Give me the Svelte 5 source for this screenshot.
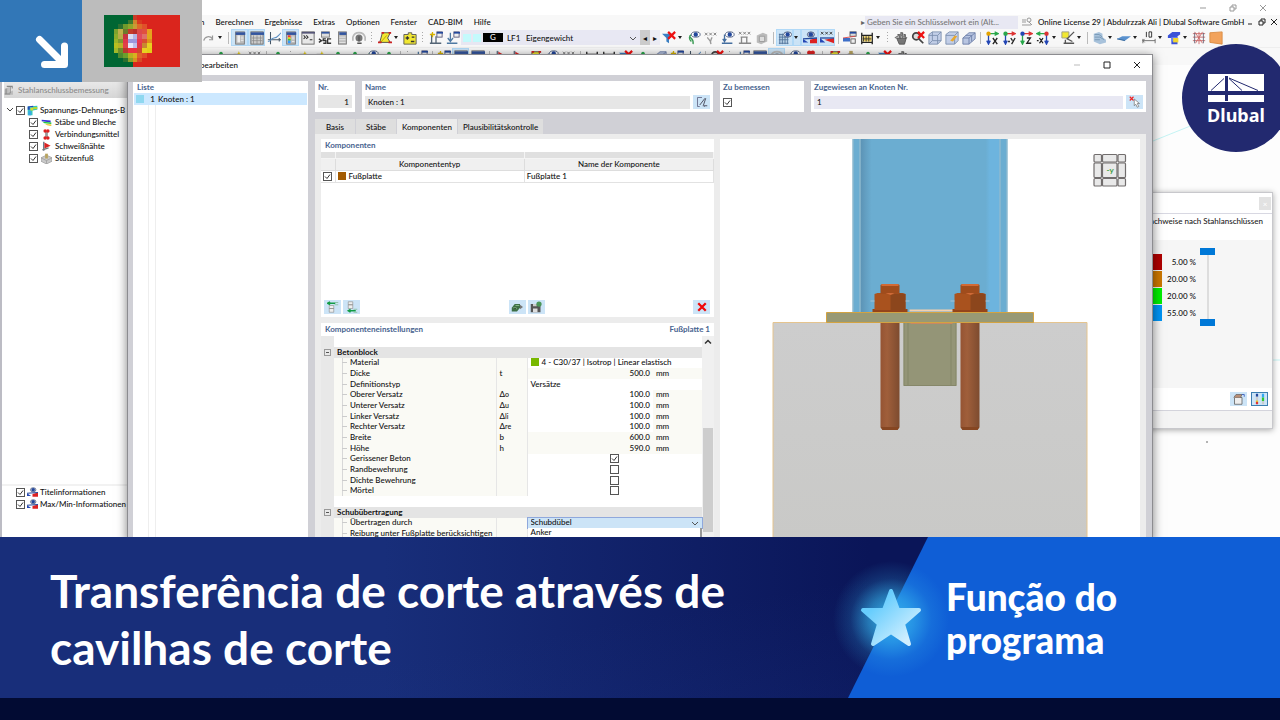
<script>
    const art = {
        redo: '<path d="M2 11c1-5 7-6 10-2M12 5v5H8" fill="none" stroke="#999" stroke-width="1.4"/>',
        panel: '<rect x="3" y="1" width="10" height="14" fill="#bbb" stroke="#777"/><path d="M3 3h11" stroke="#33559f" stroke-width="3"/><rect x="5" y="5" width="3" height="8" fill="#eee"/><path d="M9 7h3M9 9h3M9 11h3" stroke="#eee"/>',
        table: '<rect x="1" y="1" width="14" height="14" fill="#ccc" stroke="#666"/><path d="M1 3h15" stroke="#33559f" stroke-width="3"/><path d="M4 5v10M8 5v10M12 5v10M2 8h12M2 11h12" stroke="#888" stroke-width=".8"/>',
        chart: '<path d="M4 1v14M1 10h15M14 8v4" stroke="#456" fill="none" stroke-width="1.200"/><path d="M1 12c4 0 3-4 7-4s4-2 8-6" stroke="#5b8fc4" fill="none" stroke-width="1.200"/>',
        legend: '<rect x="3" y="1" width="10" height="14" fill="#bbb" stroke="#777"/><path d="M3 3h11" stroke="#33559f" stroke-width="3"/><path d="M6 5v3" stroke="#e33" stroke-width="3"/><path d="M6 7v3" stroke="#e8d820" stroke-width="3"/><path d="M6 9v2" stroke="#3c3" stroke-width="3"/><path d="M6 11v3" stroke="#39f" stroke-width="3"/><path d="M9 7h3M9 9h3M9 12h3" stroke="#eee"/>',
        console: '<rect x="1" y="1" width="14" height="14" fill="#e8e8e8" stroke="#666"/><path d="M1 2h15" stroke="#557" stroke-width="2"/><path d="M3 5l2 2-2 2M6 5l2 2-2 2M10 10h3" fill="none" stroke="#333" stroke-width="1.200"/>',
        script: '<rect x="4" y="1" width="9" height="6" fill="#ddd" stroke="#777"/><path d="M4 2h9" stroke="#33559f" stroke-width="2"/><path d="M1 9l3 2-3 2M9 9H6v2h3v3H6M15 9h-4v5h4" fill="none" stroke="#333" stroke-width="1.500"/>',
        calc: '<rect x="4" y="1" width="9" height="14" fill="#bbb" stroke="#777"/><path d="M5 3h8" stroke="#33559f" stroke-width="3"/><path d="M5 7h7M5 10h7M5 13h7" stroke="#eee"/>',
        support: '<circle cx="8" cy="8" r="4" fill="#777"/><path d="M1 11V7c2-7 12-7 14 0v4" fill="none" stroke="#bbb" stroke-width="2"/><path d="M8 6v6M6 14h5" stroke="#555" stroke-width="1.500"/>',
        shape: '<path d="M5 2h9l-3 6 3 5H2z" fill="#f2e832" stroke="#444"/><path d="M3 13l7-8" stroke="#b90" /><path d="M0 13h4M12 13h4M4 2h3M12 2h3" stroke="#c22" stroke-width="2"/>',
        plusminus: '<path d="M1 4h5V2h4v2h5v11H1z" fill="#f2e832" stroke="#555"/><path d="M3 8h4M5 6v4M9 12h4M10 7h3" stroke="#333" stroke-width="1.500"/>',
        newload: '<path d="M3 3v10M8 13V6M1 14h13" stroke="#567" stroke-width="1.500" fill="none"/><path d="M4 1v6M1 4h6" stroke="#d8b400" stroke-width="1.500"/><rect x="9" y="1" width="6" height="6" fill="#eee" stroke="#557"/><path d="M9 2h7" stroke="#23489c" stroke-width="2"/>',
        load: '<path d="M5 2v9M2 8l3 4 3-4M1 14h12" stroke="#4f7aa3" stroke-width="1.500" fill="none"/><rect x="9" y="1" width="6" height="6" fill="#eee" stroke="#557"/><path d="M9 2h7" stroke="#23489c" stroke-width="2"/>',
        filter: '<path d="M0 3h12L8 8v6l-3-2V8z" fill="#3a7fc2"/><path d="M7 1l8 8M15 1L7 9" stroke="#e11" stroke-width="2.500"/>',
        greeneye: '<path d="M3 5c0 4 5 3 4 10M5 4c-3 2-3 5 0 8" fill="none" stroke="#3b9b55" stroke-width="1.500"/><ellipse cx="10" cy="4" rx="5" ry="3" fill="#fff" stroke="#457"/><circle cx="10" cy="4" r="2.500" fill="#23489c"/>',
        values: '<path d="M1 2l3 3M4 2L1 5M6 2l3 3M9 2L6 5M11 2l3 3M14 2l-3 3" stroke="#777"/><path d="M4 7c0 3 4 2 4 8M9 7c0 3-3 3-1 8" fill="none" stroke="#999" stroke-width="1.500"/>',
        loadeye: '<path d="M4 4v8M2 9l2 3 2-3M1 14h12" fill="none" stroke="#456fa0" stroke-width="1.500"/><ellipse cx="10" cy="4" rx="5" ry="3" fill="#fff" stroke="#457"/><circle cx="10" cy="4" r="2.500" fill="#23489c"/>',
        loadvalues: '<path d="M1 1l3 3M4 1L1 4M6 1l3 3M9 1L6 4M11 1l3 3M14 1l-3 3" stroke="#777"/><path d="M4 7v6M10 7v6M1 14h14M3 7h8" stroke="#888" stroke-width="1.500"/>',
        ghost: '<path d="M2 5l7-3 5 2v8l-7 3-5-2z" fill="#bbb"/><path d="M5 6h6v6H5z" fill="#ddd" stroke="#999"/>',
        grideye: '<path d="M1 3h10v12H1z" fill="#b9d2e6"/><path d="M1 4h10M1 7h11M1 10h11M1 14h11M2 3v12M5 3v12M8 3v12M11 5v10" stroke="#52759b"/><ellipse cx="11" cy="4" rx="4.500" ry="3" fill="#fff" stroke="#457"/><circle cx="11" cy="4" r="2.500" fill="#23489c"/>',
        result: '<path d="M0 9l6 4H0z" fill="#2447b5"/><path d="M8 10l8-2v6H8z" fill="#d22"/><path d="M0 9l16-1" stroke="#23489c" stroke-width="1.500"/><ellipse cx="9" cy="4" rx="4" ry="3" fill="#ccd" stroke="#457"/><circle cx="9" cy="4" r="2.500" fill="#23489c"/>',
        resultvalues: '<path d="M1 1l3 3M4 1L1 4M6 1l3 3M9 1L6 4M11 1l3 3M14 1l-3 3" stroke="#333"/><path d="M0 8l6 5H0z" fill="#2447b5"/><path d="M5 10l11-2v6z" fill="#d22"/><path d="M0 8h16" stroke="#23489c" stroke-width="1.500"/>',
        diagram: '<rect x="8" y="1" width="7" height="5" fill="#ddd" stroke="#555"/><path d="M8 2h7" stroke="#23489c" stroke-width="2"/><path d="M0 8h8v4H0z" fill="#3d6fc8"/><rect x="9" y="9" width="5" height="5" fill="#eee" stroke="#555"/><path d="M0 8l14-2" stroke="#d44"/>',
        film: '<path d="M2 2v13M14 2v13M2 5h12M2 13h12" stroke="#222" stroke-width="1.500"/><path d="M3 6h10v6H3z" fill="#e8ca5a"/><path d="M4 6v6M7 6v6M10 6v6M3 9h10" stroke="#333"/>',
        hand: '<path d="M3 8h11l-2 7H6zM4 4h3v5M8 2h2v6M11 4h2v5" fill="#777" stroke="#555"/><path d="M1 8l6-4 8 4M8 1v6" stroke="#777" stroke-width="1.500" fill="none"/>',
        zoomoff: '<circle cx="6" cy="6" r="4" fill="#ddd" stroke="#444" stroke-width="2"/><path d="M9 9l5 5" stroke="#444" stroke-width="2"/><path d="M8 1l7 7M15 1L8 8" stroke="#e11" stroke-width="2.500"/>',
        cube: '<path d="M1 4l4-3h10v10l-4 4H1z" fill="#c3cfe8" stroke="#7c8fae"/><path d="M1 5h10v10M11 5l4-4M5 1v10h10M5 11l-4 4" fill="none" stroke="#7c8fae"/>',
        cubeyellow: '<path d="M1 4l4-3h10v10l-4 4H1z" fill="#c3cfe8" stroke="#7c8fae"/><path d="M1 5h10v10M11 5l4-4" fill="none" stroke="#7c8fae"/><path d="M6 11l5-6 3 1-5 6z" fill="#e8a830"/>',
        stack: '<path d="M1 8l7-6h7v7l-7 6H1z" fill="#b9c6e2" stroke="#6d7fa8"/><path d="M1 8h7v7M8 8l7-6M4 5h7v7" fill="none" stroke="#6d7fa8"/>',
        axisx: '<path d="M4 3h9M11 1l4 2-4 2" stroke="#29a84b" fill="none" stroke-width="1.500"/><path d="M4 4v10M2 11l2 4 2-4" stroke="#2447b5" fill="none" stroke-width="1.500"/><circle cx="4" cy="3" r="2.500" fill="#e4a300"/><path d="M9 8l5 7M14 8l-5 7" stroke="#222" stroke-width="1.500"/>',
        axisy: '<path d="M4 3h9M11 1l4 2-4 2" stroke="#d33" fill="none" stroke-width="1.500"/><path d="M4 4v10M2 11l2 4 2-4" stroke="#2447b5" fill="none" stroke-width="1.500"/><circle cx="4" cy="3" r="2.500" fill="#29a84b"/><path d="M10 8l2 3M15 8l-4 7M7 12h2" stroke="#222" stroke-width="1.500"/>',
        axisz: '<path d="M4 3h9M11 1l4 2-4 2" stroke="#d33" fill="none" stroke-width="1.500"/><path d="M4 4v10M2 11l2 4 2-4" stroke="#29a84b" fill="none" stroke-width="1.500"/><circle cx="4" cy="3" r="2.500" fill="#2447b5"/><path d="M9 8h4l-4 6h5" fill="none" stroke="#222" stroke-width="1.500"/>',
        axisnx: '<path d="M12 3H3M5 1L1 3l4 2" stroke="#29a84b" fill="none" stroke-width="1.500"/><path d="M12 4v10M10 11l2 4 2-4" stroke="#2447b5" fill="none" stroke-width="1.500"/><circle cx="12" cy="3" r="2.500" fill="#d33"/><path d="M4 8l4 6M8 8l-4 6M1 11h2" stroke="#222" stroke-width="1.500"/>',
        plane: '<path d="M1 1h8v7H1z" fill="#f2e832" stroke="#998"/><path d="M15 1L7 9l6 3M3 14h12M5 10v4" stroke="#555" fill="none" stroke-width="1.500"/>',
        solid: '<path d="M2 3l6-2 4 2v4l4 3v3l-7 2-7-3z" fill="#a9c3dc"/><path d="M3 4h5l4 3M3 7h6l5 3M3 10h6" stroke="#7596b4" fill="none"/>',
        surface: '<path d="M0 9l6-3h10l-7 5z" fill="#5a92cf"/><path d="M0 9l9 2" stroke="#2e6196"/>',
        dimension: '<path d="M1 9v5M15 9v5M1 11h14M3 13l-2-2 2-2" stroke="#666" fill="none"/><path d="M5 1v6M8 1h3v6H8z" stroke="#222" fill="none"/>',
        section: '<path d="M1 5l5-4h9v3l-3 2v9H5V8H1z" fill="#3a52d8"/><path d="M5 7h7v5H5z" fill="#6a82ee"/><path d="M7 8h6v5H7z" fill="#f2d630"/>',
        mesh: '<path d="M1 3h14M1 7h14M1 11h14M3 1l9 13M12 1L4 14M8 1v14" stroke="#c66" /><path d="M3 2v12M13 2v12" stroke="#667"/>',
        orange: '<path d="M1 2l14-1v14L1 13z" fill="#f2a35c" stroke="#d98b42"/>',
        node: '<path d="M3 13V7M13 13V7M2 14h12" stroke="#555"/><path d="M8 4l6 4M8 4L2 8" stroke="#777" fill="none" stroke-width="1.500"/><circle cx="8" cy="4" r="2" fill="#29a84b"/>',
        star: '<path d="M9 1l1 3 3 1-3 1-1 3-1-3-3-1 3-1z" fill="#e8cc10"/><path d="M3 5h5" stroke="#555"/>',
        steel: '<path d="M1 6l6-3v8l6-3v6H1z" fill="#bbb"/><path d="M4 2h8v3M9 3v9M1 13h8M3 5v8" stroke="#888" fill="none" stroke-width="1.500"/>',
        stress: '<path d="M1 2l14-1v6L8 8v7H1z" fill="#35c8c0"/><path d="M1 2h3v5H1zM1 2l8-1v2H1z" fill="#2447b5"/><path d="M9 3h6v3H9z" fill="#b8d830"/><path d="M5 4h4v4H5z" fill="#d8d830"/><path d="M2 9h4v6H2z" fill="#3aa8e8"/>',
        beam: '<path d="M1 4l13 1v3L1 6z" fill="#3434d8"/><path d="M2 7l13 1v2L5 9z" fill="#24c83c"/><path d="M6 10l9 1v2l-6-1z" fill="#e8c11d"/>',
        bolt: '<rect x="6" y="3" width="4" height="10" fill="#999"/><circle cx="6" cy="3" r="2.500" fill="#d22"/><circle cx="10" cy="3" r="2.500" fill="#d22"/><circle cx="6" cy="13" r="2.500" fill="#d22"/><circle cx="10" cy="13" r="2.500" fill="#d22"/>',
        weld: '<path d="M4 1v13" stroke="#678" stroke-width="2"/><path d="M5 2l9 5-9 4z" fill="#d22"/><path d="M2 13l9-3" stroke="#777" stroke-width="2"/>',
        foot: '<path d="M0 7l8-4 8 4v5l-8 4-8-4z" fill="#c9c9c9" stroke="#999"/><path d="M0 7l8 4 8-4M8 11v5" fill="none" stroke="#999"/><path d="M8 1v7" stroke="#b8a460" stroke-width="4"/>',
        edit: '<path d="M8 2H2v12h3M11 14h1" fill="none" stroke="#557" /><path d="M5 12l7-9M13 3l-3 9M9 13h6" stroke="#445" stroke-width="1.200"/>',
        pick: '<path d="M1 1l5 5M6 1L1 6" stroke="#e22" stroke-width="1.500"/><path d="M7 4v9l2-2 2 4 2-1-2-4h3z" fill="#fff" stroke="#777"/>',
        moveup: '<path d="M3 6h6v4H3zM3 10h6v5H3z" fill="#eee" stroke="#888" stroke-width=".8"/><path d="M1 3h10M4 1L1 3l3 2" stroke="#129c46" fill="none" stroke-width="2"/><path d="M10 5h5M10 2h5" stroke="#7bbb92"/>',
        movedown: '<path d="M3 1h6v4H3zM3 5h6v5H3z" fill="#eee" stroke="#888" stroke-width=".8"/><path d="M3 13h10M6 11l-3 2 3 2" stroke="#129c46" fill="none" stroke-width="2"/><path d="M10 11h5M10 15h5" stroke="#7bbb92"/>',
        library: '<path d="M1 9l4-5h7v5l-4 5H1z" fill="#3d6f46"/><path d="M3 9h4v2M6 6h5" stroke="#9cd09c"/><path d="M12 5l4 3-4 3z" fill="#777"/>',
        save: '<path d="M1 4h11l2 2v9H1z" fill="#555"/><path d="M4 10h6v5H4z" fill="#ddd"/><path d="M4 4h5v3H4z" fill="#ccc"/><circle cx="12" cy="4" r="3.500" fill="#4b9658"/>',
        remove: '<path d="M3 3l10 10M13 3L3 13" stroke="#f00808" stroke-width="3"/>',
        box: '<path d="M2 6h10v9H2z" fill="#eee" stroke="#555"/><path d="M1 6l3-4h8l-2 4" fill="#b88e76" stroke="#666"/><path d="M12 2h3v3" stroke="#2447b5" fill="none"/>',
        scale: '<path d="M4 1v4" stroke="#23489c" stroke-width="3"/><path d="M4 5v5" stroke="#ccc" stroke-width="3"/><path d="M4 10v2" stroke="#e8b820" stroke-width="3"/><path d="M4 12v3" stroke="#d33" stroke-width="3"/><path d="M12 1v5" stroke="#33a8f0" stroke-width="3"/><path d="M12 6v5" stroke="#30c830" stroke-width="3"/><path d="M12 11v4" stroke="#ccc" stroke-width="3"/>'
    };

    const toolsLeft = [
        'redo', 'caret', 'sep', '*panel', '*table', 'chart', '*legend', 'console', 'script', 'calc', 'support',
        'dots', 'shape', 'caret', 'plusminus', 'dots', 'newload', 'load'
    ];
    const toolsRight = [
        'filter', 'caret', 'greeneye', 'values', 'loadeye', 'loadvalues', 'ghost', 'sep', '*grideye', '*caret',
        '*result', '*resultvalues', 'sep', 'diagram', 'film', 'caret', 'dots', 'hand', 'zoomoff', 'cube',
        'cubeyellow', 'stack', 'sep', 'axisx', 'axisy', 'axisz', 'axisnx', 'caret', 'plane', 'caret', 'sep',
        'solid', 'caret', 'surface', 'caret', 'dimension', 'caret', 'section', 'caret', 'mesh', 'orange'
    ];
    const toolsSecond = [
        'node', 'star', 'values', 'sep', 'node', 'dots', 'star', 'star', 'node', 'node', 'greeneye', 'node',
        'sep', 'dots', 'load', 'sep', 'newload', '*table', 'table', 'sep', 'weld', 'weld', 'shape', 'loadeye',
        'values', 'sep', 'film', 'film', 'filter', 'node', 'stack', 'newload', 'chart', 'sep', 'zoomoff', 'dots',
        'load', 'table', '*support', 'loadeye', 'bolt', 'sep', 'shape', 'foot', 'node', 'filter', 'hand'
    ];

    const menu = ['n', 'Berechnen', 'Ergebnisse', 'Extras', 'Optionen', 'Fenster', 'CAD-BIM', 'Hilfe'];
    const tree = [
        ['beam', 'Stäbe und Bleche'],
        ['bolt', 'Verbindungsmittel'],
        ['weld', 'Schweißnähte'],
        ['foot', 'Stützenfuß']
    ];
    const tabs = ['Basis', 'Stäbe', 'Komponenten', 'Plausibilitätskontrolle'];
    let activeTab = 'Komponenten';

    const concrete = [
        { name: 'Material', material: '4 - C30/37 | Isotrop | Linear elastisch' },
        { name: 'Dicke', symbol: 't', value: '500.0', fixed: true },
        { name: 'Definitionstyp', text: 'Versätze' },
        { name: 'Oberer Versatz', symbol: 'Δ', sub: 'o', value: '100.0' },
        { name: 'Unterer Versatz', symbol: 'Δ', sub: 'u', value: '100.0' },
        { name: 'Linker Versatz', symbol: 'Δ', sub: 'li', value: '100.0' },
        { name: 'Rechter Versatz', symbol: 'Δ', sub: 're', value: '100.0' },
        { name: 'Breite', symbol: 'b', value: '600.0', fixed: true },
        { name: 'Höhe', symbol: 'h', value: '590.0', fixed: true },
        { name: 'Gerissener Beton', check: true },
        { name: 'Randbewehrung', check: false },
        { name: 'Dichte Bewehrung', check: false },
        { name: 'Mörtel', check: false }
    ];

    const legend = [
        ['#b00000', '5.00 %'],
        ['#cc7700', '20.00 %'],
        ['#00f000', '20.00 %'],
        ['#0095f5', '55.00 %']
    ];

    // emblem cells of the flag: column, row, colour
    const emblem = [
        [6, 0, '#c83c28'],
        [5, 1, '#3f7a2e'], [6, 1, '#d0862c'], [7, 1, '#d83a20'],
        [3, 2, '#2a7030'], [4, 2, '#6f9a2c'], [5, 2, '#8fa62a'], [6, 2, '#c99b35'], [7, 2, '#dc6b28'], [8, 2, '#e0502a'],
        [2, 3, '#7ea22d'], [3, 3, '#c2b04a'], [4, 3, '#6f7a2c'], [5, 3, '#c43a2a'], [6, 3, '#b92f2c'], [7, 3, '#dc4a4a'], [8, 3, '#e05040'], [9, 3, '#e8a020'],
        [2, 4, '#8cac2a'], [3, 4, '#b8ac48'], [4, 4, '#c83440'], [5, 4, '#dcdcf2'], [6, 4, '#b4b4e4'], [7, 4, '#e04a5c'], [8, 4, '#e07068'], [9, 4, '#e0a81c'],
        [2, 5, '#9cb428'], [3, 5, '#7d9a30'], [4, 5, '#e0384a'], [5, 5, '#9c98dc'], [6, 5, '#9c98dc'], [7, 5, '#e83850'], [8, 5, '#d85030'], [9, 5, '#e0901c'],
        [2, 6, '#b8c020'], [3, 6, '#b8b028'], [4, 6, '#e04048'], [5, 6, '#e8e8fa'], [6, 6, '#c0c0ea'], [7, 6, '#e03848'], [8, 6, '#c88830'], [9, 6, '#e8d020'],
        [2, 7, '#a0b82a'], [3, 7, '#6d8d2a'], [4, 7, '#b83a2c'], [5, 7, '#ea3240'], [6, 7, '#ea3240'], [7, 7, '#d0482c'], [8, 7, '#e8d020'], [9, 7, '#e4cc18'],
        [3, 8, '#4f8a2e'], [4, 8, '#6aa02c'], [5, 8, '#b8b020'], [6, 8, '#d8b020'], [7, 8, '#e0602a'], [8, 8, '#e04a2a'],
        [4, 9, '#2c7030'], [5, 9, '#88a02a'], [6, 9, '#d89020'], [7, 9, '#d84a28']
    ];
</script>

{#snippet icon(name)}
    <svg class="icon" viewBox="0 0 16 16" aria-hidden="true">{@html art[name]}</svg>
{/snippet}

{#snippet tools(list)}
    {#each list as item}
        {@const on = item.startsWith('*')}
        {@const name = item.replace('*', '')}
        {#if name === 'sep' || name === 'dots'}
            <i class={name}></i>
        {:else if name === 'caret'}
            <button class="caret" class:on aria-label="Mehr"></button>
        {:else}
            <button class="tool" class:on aria-label={name}>{@render icon(name)}</button>
        {/if}
    {/each}
{/snippet}

<div class="page">
    <main class="desktop">
        <div class="titlebar window-buttons">
            <button aria-label="Minimieren"><svg viewBox="0 0 8 8"><path d="M1 4h6" /></svg></button>
            <button aria-label="Wiederherstellen"><svg viewBox="0 0 8 8"><path d="M1 3h4v4H1zM3 3V1h4v4H5" /></svg></button>
            <button aria-label="Schließen"><svg viewBox="0 0 8 8"><path d="M1 1l6 6M7 1L1 7" /></svg></button>
        </div>

        <nav class="menubar">
            {#each menu as item}
                <button>{item}</button>
            {/each}
            <span class="hint">▸</span>
            <input class="search" aria-label="Suche" placeholder="Geben Sie ein Schlüsselwort ein (Alt..." />
            <svg class="find" viewBox="0 0 12 10"><path d="M1 3h4M1 5h4M1 8h9M8 5l3 3" /><circle cx="8" cy="3" r="2" /></svg>
            <span class="license">Online License 29 | Abdulrzzak Ali | Dlubal Software GmbH</span>
            <div class="window-buttons inner">
                <button aria-label="Fenster minimieren"><svg viewBox="0 0 8 8"><path d="M2 6h4" /></svg></button>
                <button aria-label="Fenster wiederherstellen"><svg viewBox="0 0 8 8"><path d="M1 3h4v4H1zM3 3V1h4v4H5" /></svg></button>
                <button aria-label="Fenster schließen"><svg viewBox="0 0 8 8"><path d="M1 1l6 6M7 1L1 7" /></svg></button>
            </div>
        </nav>

        <div class="toolbar">
            {@render tools(toolsLeft)}
            <div class="loadcase">
                <i class="cyan"></i><i class="cyan"></i><b>G</b><span>LF1</span>
                <select aria-label="Lastfall"><option>Eigengewicht</option></select>
                <svg viewBox="0 0 8 8"><path d="M1 3l3 3 3-3" /></svg>
            </div>
            <button class="step back" aria-label="Zurück">◂</button>
            <button class="step" aria-label="Weiter">▸</button>
            {@render tools(toolsRight)}
        </div>
        <div class="toolbar second">{@render tools(toolsSecond)}</div>

        <div class="workspace">
            <aside class="navigator">
                <h2>{@render icon('steel')} Stahlanschlussbemessung</h2>
                <div class="tree">
                    <label class="root">
                        <svg class="fold" viewBox="0 0 8 8"><path d="M1 2l3 3 3-3" /></svg>
                        <input type="checkbox" checked />{@render icon('stress')}Spannungs-Dehnungs-B
                    </label>
                    {#each tree as [name, text]}
                        <label><input type="checkbox" checked />{@render icon(name)}{text}</label>
                    {/each}
                </div>
                <div class="tree info">
                    {#each ['Titelinformationen', 'Max/Min-Informationen'] as text}
                        <label><input type="checkbox" checked />{@render icon('result')}{text}</label>
                    {/each}
                </div>
            </aside>
            <svg class="model" viewBox="0 0 127 474" preserveAspectRatio="xMidYMin slice"><path d="M0 76l127-51M120 295h7" stroke="#c4f4f4" /><circle cx="54" cy="377" r=".8" fill="#555" /></svg>
        </div>

        <section class="panel">
            <header><button aria-label="Panel schließen">×</button></header>
            <h3>Nachweise nach Stahlanschlüssen</h3>
            <div class="scale">
                <ul>
                    {#each legend as [color, share]}
                        <li><i style="background: {color}"></i>{share}</li>
                    {/each}
                </ul>
                <div class="range">
                    <input type="range" aria-label="Obergrenze" value="100" />
                    <input type="range" aria-label="Untergrenze" value="0" />
                </div>
            </div>
            <footer>
                <button class="small" aria-label="Optionen">{@render icon('box')}</button>
                <button class="small framed" aria-label="Farbskala">{@render icon('scale')}</button>
            </footer>
            <div class="status"></div>
        </section>

        <section class="dialog">
            <header class="dialog-title">
                <h2>bearbeiten</h2>
                <div class="window-buttons">
                    <button class="off" aria-label="Dialog minimieren"><svg viewBox="0 0 8 8"><path d="M1 4h6" /></svg></button>
                    <button aria-label="Dialog maximieren"><svg viewBox="0 0 8 8"><path d="M1 1h6v6H1z" /></svg></button>
                    <button aria-label="Dialog schließen"><svg viewBox="0 0 8 8"><path d="M1 1l6 6M7 1L1 7" /></svg></button>
                </div>
            </header>

            <div class="dialog-body">
                <div class="list">
                    <h3>Liste</h3>
                    <button class="entry"><i></i><span>1</span>Knoten : 1</button>
                    <div class="rules"></div>
                </div>

                <div class="details">
                    <div class="fields">
                        <div class="box">
                            <label for="nr">Nr.</label>
                            <input id="nr" class="right" value="1" />
                        </div>
                        <div class="box">
                            <label for="name">Name</label>
                            <div class="line">
                                <input id="name" value="Knoten : 1" />
                                <button class="small" aria-label="Name bearbeiten">{@render icon('edit')}</button>
                            </div>
                        </div>
                        <div class="box">
                            <label for="design">Zu bemessen</label>
                            <div class="line"><input id="design" type="checkbox" checked /></div>
                        </div>
                        <div class="box">
                            <label for="nodes">Zugewiesen an Knoten Nr.</label>
                            <div class="line">
                                <input id="nodes" class="lilac" value="1" />
                                <button class="small" aria-label="Knoten wählen">{@render icon('pick')}</button>
                            </div>
                        </div>
                    </div>

                    <div class="tabs" role="tablist">
                        {#each tabs as tab}
                            <button role="tab" aria-selected={tab === activeTab} on:click={() => (activeTab = tab)}>{tab}</button>
                        {/each}
                    </div>

                    <div class="tab-body">
                        <div class="column">
                            <div class="card components">
                                <h3>Komponenten</h3>
                                <table>
                                    <thead>
                                        <tr class="band"><td></td><td></td><td></td></tr>
                                        <tr><th></th><th>Komponententyp</th><th>Name der Komponente</th></tr>
                                    </thead>
                                    <tbody>
                                        <tr>
                                            <td><input type="checkbox" aria-label="Fußplatte aktiv" checked /></td>
                                            <td><i class="swatch brown"></i>Fußplatte</td>
                                            <td>Fußplatte 1</td>
                                        </tr>
                                    </tbody>
                                </table>
                                <div class="actions">
                                    <button class="small" aria-label="Davor einfügen">{@render icon('moveup')}</button>
                                    <button class="small" aria-label="Danach einfügen">{@render icon('movedown')}</button>
                                    <span></span>
                                    <button class="small" aria-label="Bibliothek">{@render icon('library')}</button>
                                    <button class="small" aria-label="Speichern">{@render icon('save')}</button>
                                    <span></span>
                                    <button class="small" aria-label="Löschen">{@render icon('remove')}</button>
                                </div>
                            </div>

                            <div class="card settings">
                                <h3>Komponenteneinstellungen <span>Fußplatte 1</span></h3>
                                <div class="scroller">
                                    <table>
                                        <colgroup>
                                            <col class="col-tree" />
                                            <col class="col-name" />
                                            <col class="col-symbol" />
                                            <col class="col-value" />
                                            <col />
                                        </colgroup>
                                        <tbody>
                                            <tr class="section"><td><i class="minus"></i></td><th colspan="4">Betonblock</th></tr>
                                            {#each concrete as row}
                                                <tr>
                                                    <td></td>
                                                    <td class="name">{row.name}</td>
                                                    <td class="symbol">{row.symbol ?? ''}<small>{row.sub ?? ''}</small></td>
                                                    {#if row.value}
                                                        <td class="value" class:fixed={row.fixed}>{row.value}</td>
                                                        <td class="unit">mm</td>
                                                    {:else if row.material}
                                                        <td colspan="2"><i class="swatch green"></i>{row.material}</td>
                                                    {:else if row.text}
                                                        <td colspan="2">{row.text}</td>
                                                    {:else}
                                                        <td colspan="2" class="tick"><input type="checkbox" aria-label={row.name} checked={row.check} /></td>
                                                    {/if}
                                                </tr>
                                            {/each}
                                            <tr class="blank"><td></td><td colspan="4"></td></tr>
                                            <tr class="section"><td><i class="minus"></i></td><th colspan="4">Schubübertragung</th></tr>
                                            <tr>
                                                <td></td>
                                                <td class="name">Übertragen durch</td>
                                                <td class="symbol"></td>
                                                <td colspan="2" class="choice">
                                                    <select aria-label="Übertragen durch"><option>Schubdübel</option></select>
                                                    <svg viewBox="0 0 8 8"><path d="M1 3l3 3 3-3" /></svg>
                                                    <ul class="options"><li>Anker</li></ul>
                                                </td>
                                            </tr>
                                            <tr>
                                                <td></td>
                                                <td class="name">Reibung unter Fußplatte berücksichtigen</td>
                                                <td class="symbol"></td>
                                                <td colspan="2"></td>
                                            </tr>
                                        </tbody>
                                    </table>
                                    <div class="scrollbar">
                                        <svg viewBox="0 0 8 8"><path d="M2 5l2-2 2 2" /></svg>
                                        <i></i>
                                    </div>
                                </div>
                            </div>
                        </div>

                        <div class="viewer">
                            <svg viewBox="0 0 421 400" preserveAspectRatio="xMidYMin slice" role="img" aria-label="Fußplatte">
                                <defs>
                                    <linearGradient id="web">
                                        <stop offset="0" stop-color="#5c93b5" />
                                        <stop offset=".08" stop-color="#6badd1" />
                                        <stop offset=".9" stop-color="#6badd1" />
                                        <stop offset=".93" stop-color="#6db4de" />
                                        <stop offset="1" stop-color="#6db4de" />
                                    </linearGradient>
                                    <linearGradient id="rod">
                                        <stop offset="0" stop-color="#955433" />
                                        <stop offset=".35" stop-color="#a05f3b" />
                                        <stop offset="1" stop-color="#7d4b2f" />
                                    </linearGradient>
                                    <linearGradient id="block" x2="0" y2="1">
                                        <stop offset="0" stop-color="#cdcdcd" />
                                        <stop offset="1" stop-color="#c9c9c7" />
                                    </linearGradient>
                                    <g id="anchor">
                                        <path d="M8 39h19v104l-2 3H10l-2-3z" fill="url(#rod)" />
                                        <path d="M8 143l2 3h15l2-3z" fill="#864622" />
                                        <path d="M0 25h35v3H0z" fill="#94441a" />
                                        <path d="M2 10l3-1h25l3 1v16H2z" fill="#a9521e" />
                                        <path d="M18 11l8-2 7 1v16H18z" fill="#8c461c" />
                                        <path d="M8 1l2-1h15l2 1v9H8z" fill="#a04c1c" />
                                        <path d="M9 0h17v2H9z" fill="#d26a35" />
                                        <path d="M13 9h9l-4 2z" fill="#cf6a38" />
                                        <path d="M-2 17h4M33 17h4" stroke="#a6c3d4" />
                                    </g>
                                </defs>
                                <path d="M133 0h155v173H133z" fill="#6badd1" />
                                <path d="M141 0h139v173H141z" fill="url(#web)" />
                                <path d="M133.500 0v173M140.500 0v173M280.500 0v173M287.500 0v173" stroke="#9fbfce" />
                                <path d="M53.500 183.500h314V402h-314z" fill="url(#block)" stroke="#e5c48e" />
                                <path d="M184 184h53v63h-53z" fill="#949577" />
                                <path d="M184.500 184v62.500h52V184M188.500 184v62M231.500 184v62" fill="none" stroke="#808163" stroke-width=".7" />
                                <path d="M190 171.500h48" stroke="#f3cfae" stroke-width="2" />
                                <use href="#anchor" x="153" y="145" />
                                <use href="#anchor" x="233" y="145" />
                                <path d="M107 173.500h207v10H107z" fill="#989974" stroke="#d3a341" />
                                <path d="M191 184.500h42" stroke="#c98862" />
                                <g fill="#e9e9e9" stroke="#716d6d" stroke-width="1.200">
                                    <rect x="374.500" y="15.500" width="7.500" height="7.500" rx="1" /><rect x="383" y="15.500" width="14.500" height="7.500" rx="1" /><rect x="398.500" y="15.500" width="7.500" height="7.500" rx="1" />
                                    <rect x="374.500" y="24" width="7.500" height="14.500" rx="1" /><rect x="383" y="24" width="14.500" height="14.500" rx="1" /><rect x="398.500" y="24" width="7.500" height="14.500" rx="1" />
                                    <rect x="374.500" y="39.500" width="7.500" height="7.500" rx="1" /><rect x="383" y="39.500" width="14.500" height="7.500" rx="1" /><rect x="398.500" y="39.500" width="7.500" height="7.500" rx="1" />
                                </g>
                                <text x="387" y="34">-y</text>
                            </svg>
                        </div>
                    </div>
                </div>
            </div>
        </section>

        <svg class="logo" viewBox="0 0 108 108" role="img" aria-label="Dlubal">
            <circle cx="54" cy="54" r="54" fill="#22296f" />
            <path d="M26 30h56v17H26zM26 51h56v7H26z" fill="#fff" />
            <path d="M29 46.500l13-12M47 34.500l13 12M47 34l29 12.500" stroke="#22296f" fill="none" />
            <path d="M44.500 32v25" stroke="#22296f" stroke-width="3" />
            <text x="54" y="78" text-anchor="middle">Dlubal</text>
        </svg>

        <div class="badges">
            <svg class="arrow" viewBox="0 0 82 82"><path d="M39.500 39.500L64 64M64.500 46v18.500H44.500" /></svg>
            <div class="flag">
                <svg viewBox="0 0 16 11" preserveAspectRatio="none" shape-rendering="crispEdges" role="img" aria-label="Português">
                    <path d="M0 0h6v11H0z" fill="#006633" />
                    <path d="M6 0h10v11H6z" fill="#da251d" />
                    {#each emblem as [x, y, color]}
                        <rect {x} {y} width="1" height="1" fill={color} />
                    {/each}
                </svg>
            </div>
        </div>
    </main>

    <div class="banner">
        <h1>Transferência de corte através de cavilhas de corte</h1>
        <div class="category">
            <p>Função do programa</p>
        </div>
        <svg class="star" viewBox="0 0 180 180" aria-hidden="true">
            <defs>
                <radialGradient id="glow">
                    <stop offset="0" stop-color="#35b5ee" />
                    <stop offset=".4" stop-color="#35b5ee" stop-opacity=".6" />
                    <stop offset=".7" stop-color="#35b5ee" stop-opacity=".18" />
                    <stop offset="1" stop-color="#35b5ee" stop-opacity="0" />
                </radialGradient>
                <linearGradient id="shine" x2="1" y2="1">
                    <stop offset=".25" stop-color="#67cdfd" />
                    <stop offset=".85" stop-color="#d0efff" />
                </linearGradient>
            </defs>
            <circle cx="90" cy="90" r="58" fill="url(#glow)" />
            <path d="M90 62l7 19h21l-16 14 6 20-18-12-18 12 6-20-16-14h21z" fill="url(#shine)" stroke="url(#shine)" stroke-width="4" stroke-linejoin="round" />
        </svg>
    </div>
    <div class="strip"></div>
</div>

<style>
    :global(body) {
        font-family: Lato, "Open Sans", sans-serif;
        font-size: 8px;
        font-weight: 500;
        color: #111;
    }

    * {
        box-sizing: border-box;
    }

    h1, h2, h3, p, ul {
        margin: 0;
        padding: 0;
        font-weight: 500;
        list-style: none;
    }

    h2, h3 {
        font-size: 8px;
    }

    h3 {
        color: #48648f;
        font-weight: 700;
    }

    button, input, select {
        font: inherit;
        color: inherit;
        border: 0;
        padding: 0;
        margin: 0;
        background: none;
        border-radius: 0;
    }

    select {
        appearance: none;
    }

    input[type="checkbox"] {
        appearance: none;
        flex: none;
        display: block;
        width: 9px;
        height: 9px;
        border: 1px solid #555;
        background: #fff;
    }

    input[type="checkbox"]:checked {
        background: #fff url("data:image/svg+xml,%3Csvg xmlns='http://www.w3.org/2000/svg' viewBox='0 0 7 7'%3E%3Cpath d='M1 3.500l2 2 3-4' fill='none' stroke='%23333'/%3E%3C/svg%3E") center / 7px 7px no-repeat;
    }

    .icon {
        display: block;
        flex: none;
        width: 14px;
        height: 14px;
    }

    .page {
        display: flex;
        flex-direction: column;
        min-height: 100vh;
        overflow: hidden;
    }

    .desktop {
        position: relative;
        flex: 1;
        display: flex;
        flex-direction: column;
        overflow: hidden;
        background: #fff;
    }

    .window-buttons {
        display: flex;
        justify-content: flex-end;
    }

    .window-buttons button {
        width: 30px;
        display: flex;
        align-items: center;
        justify-content: center;
    }

    .window-buttons svg {
        width: 8px;
        height: 8px;
        fill: none;
        stroke: #222;
    }

    .window-buttons .off {
        opacity: .3;
    }

    .titlebar {
        height: 15px;
        padding-right: 2px;
    }

    .titlebar svg {
        stroke: #999;
    }

    .window-buttons.inner button {
        width: 12px;
    }

    .menubar {
        display: flex;
        align-items: center;
        height: 14px;
        padding-left: 200px;
        background: #f8f8f8;
        white-space: nowrap;
    }

    .menubar > button {
        margin-right: 11px;
    }

    .hint {
        margin-left: auto;
        color: #666;
    }

    .search {
        width: 153px;
        height: 13px;
        padding-left: 2px;
        background: #e8e8f3;
    }

    .search::placeholder {
        color: #777;
        opacity: 1;
    }

    .find {
        width: 12px;
        height: 10px;
        margin: 0 5px 0 3px;
        fill: none;
        stroke: #999;
    }

    .license {
        width: 206px;
    }

    .toolbar {
        display: flex;
        height: 18px;
        padding-left: 200px;
        background: #f8f8f8;
    }

    .toolbar.second {
        border-top: 1px solid #eee;
        padding-left: 212px;
    }

    .tool, .caret {
        flex: none;
        display: flex;
        align-items: center;
        justify-content: center;
        width: 17px;
        height: 17px;
    }

    .caret {
        width: 8px;
        justify-content: flex-start;
    }

    .caret::before {
        content: "";
        border: 2px solid transparent;
        border-top: 3px solid #222;
        border-bottom: 0;
        margin-left: 1px;
    }

    .on {
        background: #cce4f7;
        box-shadow: inset 0 0 0 1px #b1d9f7;
    }

    .sep, .dots {
        flex: none;
        width: 6px;
        margin: 3px 0;
        background: linear-gradient(#bbb, #bbb) center / 1px 100% no-repeat;
    }

    .dots {
        width: 9px;
        background: repeating-linear-gradient(#aaa 0 1px, transparent 1px 3px) center / 1px 100% no-repeat;
    }

    .loadcase {
        flex: none;
        display: flex;
        align-items: center;
        width: 179px;
        height: 15px;
        margin-top: 1px;
        padding-left: 2px;
        gap: 2px;
        background: #e8e8f3;
    }

    .cyan {
        width: 8px;
        height: 8px;
        background: #c4fafc;
    }

    .loadcase b {
        width: 20px;
        height: 9px;
        line-height: 9px;
        font-weight: 500;
        text-align: center;
        color: #fff;
        background: #000;
    }

    .loadcase span {
        width: 19px;
        padding-left: 2px;
    }

    .loadcase select {
        flex: 1;
    }

    .loadcase svg, .choice svg {
        width: 8px;
        height: 8px;
        margin-right: 3px;
        fill: none;
        stroke: #555;
    }

    .step {
        flex: none;
        width: 10px;
        height: 15px;
        margin-top: 1px;
        background: #ececf4;
    }

    .back {
        background: #ccc;
    }

    .workspace {
        flex: 1;
        display: flex;
        justify-content: space-between;
        background: #fdfdfd;
    }

    .navigator {
        display: flex;
        flex-direction: column;
        width: 130px;
        padding-top: 17px;
        background: #fff;
        border-left: 2px solid #bcbcc4;
        overflow: hidden;
        white-space: nowrap;
    }

    .navigator h2 {
        display: flex;
        align-items: center;
        gap: 3px;
        height: 16px;
        margin: 0 0 6px 2px;
        color: #8a8a8a;
        background: linear-gradient(#e8e8e8, #d6d6d6);
    }

    .navigator .icon {
        width: 11px;
        height: 11px;
    }

    .tree label {
        display: flex;
        align-items: center;
        gap: 3px;
        height: 12px;
        padding-left: 27px;
    }

    .tree .root, .tree.info label {
        gap: 2px;
        padding-left: 14px;
    }

    .tree .root {
        padding-left: 4px;
    }

    .fold {
        flex: none;
        width: 8px;
        height: 8px;
        fill: none;
        stroke: #444;
    }

    .info {
        margin-top: auto;
        height: 53px;
        border-top: 2px solid #f2f2f2;
    }

    .model {
        width: 127px;
        height: 400px;
        overflow: visible;
    }

    .panel {
        position: absolute;
        top: 192px;
        right: 7px;
        width: 140px;
        background: #fff;
        border: 1px solid #c8c8cc;
        box-shadow: 0 1px 6px rgba(0, 0, 0, .35);
    }

    .panel header {
        display: flex;
        justify-content: flex-end;
        height: 21px;
        padding: 4px 1px;
        border-bottom: 1px solid #d8d8e2;
    }

    .panel header button {
        width: 12px;
        height: 13px;
        background: #e2e2e2;
        color: #fff;
    }

    .panel h3 {
        height: 26px;
        line-height: 14px;
        padding-right: 9px;
        text-align: right;
        color: #222;
        white-space: nowrap;
        font-weight: 500;
    }

    .scale {
        display: flex;
        justify-content: flex-end;
        height: 148px;
        padding: 8px 57px 0 0;
        background: #f6f6f6;
    }

    .scale ul {
        padding: 6px 4px 0 0;
    }

    .scale li {
        display: flex;
        align-items: center;
        justify-content: space-between;
        width: 48px;
        height: 17px;
        border-bottom: 1px solid #f6f6f6;
    }

    .scale li i {
        width: 14px;
        height: 16px;
    }

    .range {
        display: flex;
        flex-direction: column;
        height: 78px;
        width: 15px;
        background: linear-gradient(#ddd, #ddd) center / 2px 100% no-repeat;
    }

    .range input {
        appearance: none;
        writing-mode: vertical-lr;
        direction: rtl;
        width: 15px;
        height: 39px;
    }

    .range input::-webkit-slider-thumb {
        appearance: none;
        width: 15px;
        height: 7px;
        background: #0078d7;
    }

    .panel footer {
        display: flex;
        justify-content: flex-end;
        gap: 4px;
        height: 22px;
        padding: 4px 4px 0 0;
    }

    .status {
        height: 18px;
        background: #f4f4f4;
        border-top: 1px solid #d4d4dc;
    }

    .small {
        flex: none;
        display: flex;
        align-items: center;
        justify-content: center;
        width: 17px;
        height: 14px;
        background: #cce4f7;
    }

    .small .icon {
        width: 12px;
        height: 12px;
    }

    .framed {
        border: 1px solid #3c7fb1;
    }

    .dialog {
        position: absolute;
        inset: 54px 127px -4px 127px;
        display: flex;
        flex-direction: column;
        background: #d0d0d6;
        border: 1px solid #8c8c90;
        box-shadow: 0 2px 10px rgba(0, 0, 0, .5);
    }

    .dialog-title {
        display: flex;
        justify-content: space-between;
        flex: none;
        height: 20px;
        line-height: 20px;
        padding-left: 72px;
        background: #fff;
    }

    .dialog-body {
        flex: 1;
        display: flex;
        gap: 7px;
        min-height: 0;
        padding: 6px 6px 0 5px;
    }

    .list {
        flex: none;
        display: flex;
        flex-direction: column;
        width: 175px;
        background: #fff;
    }

    .list h3 {
        height: 12px;
        line-height: 12px;
        padding-left: 4px;
    }

    .entry {
        display: flex;
        align-items: center;
        height: 12px;
        margin: 0 1px;
        background: #cce8ff;
    }

    .entry i {
        width: 8px;
        height: 8px;
        margin-left: 2px;
        background: #8fd8f0;
    }

    .entry span {
        width: 14px;
        padding-right: 3px;
        text-align: right;
    }

    .rules {
        flex: 1;
        width: 8px;
        margin-left: 15px;
        border: 1px solid #eee;
        border-width: 0 1px;
    }

    .details {
        flex: 1;
        display: flex;
        flex-direction: column;
        min-width: 0;
    }

    .fields {
        display: grid;
        grid-template-columns: 40px 351px 84px 1fr;
        gap: 7px;
    }

    .box {
        height: 31px;
        padding: 0 3px;
        background: #fff;
    }

    .box label {
        display: block;
        height: 14px;
        line-height: 12px;
        color: #48648f;
        font-weight: 700;
    }

    .line {
        display: flex;
        align-items: center;
        height: 14px;
        gap: 3px;
    }

    .box input:not([type="checkbox"]) {
        flex: 1;
        width: 100%;
        height: 13px;
        padding: 0 3px;
        background: #e6e6e6;
    }

    .box .right {
        text-align: right;
    }

    .box input.lilac:not([type="checkbox"]) {
        background: #e8e8f3;
    }

    .tabs {
        display: flex;
        gap: 1px;
        margin-top: 7px;
    }

    .tabs button {
        height: 15px;
        min-width: 40px;
        padding: 0 5px;
        background: #dedede;
        white-space: nowrap;
    }

    .tabs button[aria-selected="true"] {
        background: #ececec;
    }

    .tab-body {
        flex: 1;
        display: flex;
        gap: 6px;
        min-height: 0;
        padding: 5px 6px 0;
        background: #ececec;
    }

    .column {
        flex: none;
        width: 393px;
        display: flex;
        flex-direction: column;
        gap: 6px;
    }

    .card {
        background: #fff;
    }

    .card h3 {
        display: flex;
        justify-content: space-between;
        height: 13px;
        line-height: 13px;
        padding: 0 4px;
    }

    table {
        width: 100%;
        border-collapse: collapse;
        table-layout: fixed;
    }

    td, th {
        padding: 0 3px;
        text-align: left;
        font-weight: 500;
        white-space: nowrap;
        line-height: 10px;
    }

    .components {
        flex: none;
        display: flex;
        flex-direction: column;
        height: 178px;
    }

    .components th {
        height: 12px;
        text-align: center;
        background: #f0f0f0;
        border: 1px solid #ddd;
        border-width: 0 1px 1px 0;
    }

    .components td {
        height: 12px;
        padding: 0 2px;
        border: 1px solid #e2e2e2;
        border-width: 0 1px 1px 0;
    }

    .components tr > :first-child {
        width: 14px;
    }

    .components .band td {
        height: 6px;
        line-height: 5px;
        background: #e0e0e0;
        border-color: #f4f4f4;
    }

    .swatch {
        display: inline-block;
        width: 8px;
        height: 8px;
        margin-right: 3px;
        vertical-align: -1px;
    }

    .brown {
        background: #a35a00;
    }

    .green {
        background: #78b800;
    }

    .actions {
        display: flex;
        gap: 2px;
        margin-top: auto;
        padding: 0 4px 3px 3px;
    }

    .actions span {
        flex: 1;
    }

    .scroller {
        display: flex;
        padding-top: 11px;
        background: linear-gradient(#e8e8e8, #e8e8e8) left / 13px 100% no-repeat;
    }

    .settings table {
        width: 381px;
        height: 192px;
    }

    .col-tree {
        width: 13px;
    }

    .col-name {
        width: 162px;
    }

    .col-symbol {
        width: 31px;
    }

    .col-value {
        width: 126px;
    }

    .settings td, .settings th {
        line-height: 9px;
        height: 10px;
    }

    .settings tr > :first-child {
        padding: 0;
        background: #e8e8e8;
    }

    .section th {
        background: #e4e4e4;
        font-weight: 700;
    }

    .settings .name {
        padding-left: 16px;
        background: linear-gradient(#ccc, #ccc) 8px center / 5px 1px no-repeat, linear-gradient(#d8d8d8, #d8d8d8) 8px 0 / 1px 100% no-repeat, #fafaf5;
    }

    .settings .symbol {
        background: #fafaf5;
        border: 1px solid #e6e6e6;
        border-width: 0 1px;
    }

    small {
        font-size: 7px;
    }

    .value {
        text-align: right;
    }

    .fixed, .unit {
        background: #fafaf5;
    }

    .tick input {
        margin: 0 auto;
    }

    .minus {
        display: block;
        width: 7px;
        height: 7px;
        margin: 0 auto;
        border: 1px solid #999;
        background: linear-gradient(#555, #555) center / 3px 1px no-repeat;
    }

    .settings .choice {
        position: relative;
        padding: 0;
        background: #cce4f7;
    }

    .choice select {
        display: block;
        width: 100%;
        height: 10px;
        padding-left: 3px;
        outline: 1px solid #8fa8dc;
    }

    .choice svg {
        position: absolute;
        top: 1px;
        right: 0;
        pointer-events: none;
    }

    .options {
        position: absolute;
        top: 100%;
        left: 0;
        right: 0;
        padding: 0 3px;
        background: #fff;
        border-right: 2px solid #999;
    }

    .scrollbar {
        flex: 1;
        margin-top: -11px;
        display: flex;
        flex-direction: column;
        align-items: center;
        background: #f0f0f0;
    }

    .scrollbar svg {
        width: 12px;
        height: 12px;
        fill: none;
        stroke: #333;
    }

    .scrollbar i {
        width: 10px;
        height: 104px;
        margin-top: 80px;
        background: #cdcdcd;
    }

    .viewer {
        flex: 1;
        min-width: 0;
        background: #fff;
    }

    .viewer svg {
        display: block;
        width: 100%;
        height: 400px;
    }

    .viewer text {
        fill: #3c9a3c;
        font-weight: 700;
        font-size: 8px;
    }

    .logo {
        position: absolute;
        top: 44px;
        right: -10px;
        width: 108px;
        height: 108px;
    }

    .logo text {
        fill: #fff;
        font: 700 18px "Noto Sans", "Open Sans", sans-serif;
    }

    .badges {
        position: absolute;
        top: 0;
        left: 0;
        display: flex;
    }

    .arrow {
        width: 82px;
        height: 82px;
        fill: none;
        stroke: #fff;
        stroke-width: 7px;
        stroke-linecap: round;
        stroke-linejoin: round;
        background: #3277b7;
    }

    .flag {
        padding: 15px 22px;
        background: #bcbcbc;
    }

    .flag svg {
        display: block;
        width: 76px;
        height: 52px;
    }

    .banner {
        position: relative;
        display: flex;
        align-items: stretch;
        justify-content: space-between;
        color: #fff;
        font-family: Lato, "Open Sans", sans-serif;
        background: linear-gradient(170deg, transparent 50%, rgba(30, 60, 140, .25)), linear-gradient(to right, #182e7a 30%, #0a1558 68%);
    }

    h1 {
        max-width: 770px;
        padding: 25px 0 22px 50px;
        font-size: 46px;
        line-height: 57px;
        font-weight: 700;
    }

    .category {
        display: flex;
        align-items: center;
        width: 432px;
        padding-left: 98px;
        background: #0f5ed6;
        clip-path: polygon(80px 0, 100% 0, 100% 100%, 0 100%);
    }

    .category p {
        max-width: 200px;
        font-size: 37px;
        line-height: 43px;
        font-weight: 900;
    }

    .star {
        position: absolute;
        top: -8px;
        right: 299px;
        width: 180px;
        height: 180px;
    }

    .strip {
        height: 22px;
        background: #020b33;
    }
</style>
